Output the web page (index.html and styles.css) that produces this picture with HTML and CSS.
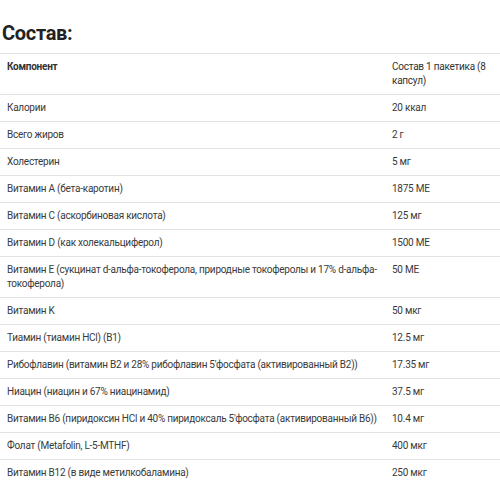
FILE: index.html
```
<!DOCTYPE html>
<html lang="ru">
<head>
<meta charset="utf-8">
<link rel="stylesheet" href="styles.css">
</head>
<body>
<div class="page">
  <h2 class="title">Состав:</h2>
  <table class="facts">
    <thead>
      <tr><th class="name">Компонент</th><th class="amount">Состав 1 пакетика (8 капсул)</th></tr>
    </thead>
    <tbody>
      <tr><td>Калории</td><td>20 ккал</td></tr>
      <tr><td>Всего жиров</td><td>2 г</td></tr>
      <tr><td>Холестерин</td><td>5 мг</td></tr>
      <tr><td>Витамин A (бета-каротин)</td><td>1875 МЕ</td></tr>
      <tr><td>Витамин C (аскорбиновая кислота)</td><td>125 мг</td></tr>
      <tr><td>Витамин D (как холекальциферол)</td><td>1500 МЕ</td></tr>
      <tr><td>Витамин E (сукцинат d-альфа-токоферола, природные токоферолы и 17% d-альфа-токоферола)</td><td>50 МЕ</td></tr>
      <tr><td>Витамин K</td><td>50 мкг</td></tr>
      <tr><td>Тиамин (тиамин HCl) (B1)</td><td>12.5 мг</td></tr>
      <tr><td>Рибофлавин (витамин B2 и 28% рибофлавин 5'фосфата (активированный B2))</td><td>17.35 мг</td></tr>
      <tr><td>Ниацин (ниацин и 67% ниацинамид)</td><td>37.5 мг</td></tr>
      <tr><td>Витамин B6 (пиридоксин HCl и 40% пиридоксаль 5'фосфата (активированный B6))</td><td>10.4 мг</td></tr>
      <tr><td>Фолат (Metafolin, L-5-MTHF)</td><td>400 мкг</td></tr>
      <tr><td>Витамин B12 (в виде метилкобаламина)</td><td>250 мкг</td></tr>
    </tbody>
  </table>
</div>
</body>
</html>
```
FILE: styles.css
```
html, body {
  margin: 0;
  padding: 0;
  background: #fff;
}
.page {
  padding: 0;
  font-family: Roboto, "Noto Sans", sans-serif;
  color: #3a3a3a;
}
.title {
  margin: 0;
  padding: 22px 0 0 2px;
  height: 31px;
  box-sizing: content-box;
  font-size: 20px;
  line-height: 22px;
  font-weight: 700;
  color: #222;
  letter-spacing: -0.3px;
}
.facts {
  width: 500px;
  border-collapse: collapse;
  table-layout: fixed;
  font-size: 10px;
  letter-spacing: -0.25px;
  line-height: 14px;
}
.facts th,
.facts td {
  text-align: left;
  vertical-align: top;
  padding: 6px 7px 6px 7px;
  border-top: 1px solid #e2e2e2;
}
.facts td + td,
.facts th + th {
  padding-left: 6px;
}
.facts .name {
  width: 372px;
}
.facts th {
  font-weight: 700;
  color: #333;
}
.facts th.amount {
  font-weight: 400;
}
```
